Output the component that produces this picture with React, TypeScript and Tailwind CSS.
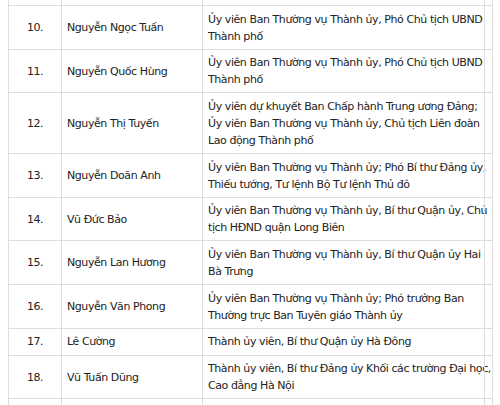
const rows: { n: string; name: string; lines: string[] }[] = [
  { n: '10.', name: 'Nguyễn Ngọc Tuấn', lines: ['Ủy viên Ban Thường vụ Thành ủy, Phó Chủ tịch UBND', 'Thành phố'] },
  { n: '11.', name: 'Nguyễn Quốc Hùng', lines: ['Ủy viên Ban Thường vụ Thành ủy, Phó Chủ tịch UBND', 'Thành phố'] },
  {
    n: '12.',
    name: 'Nguyễn Thị Tuyến',
    lines: ['Ủy viên dự khuyết Ban Chấp hành Trung ương Đảng;', 'Ủy viên Ban Thường vụ Thành ủy, Chủ tịch Liên đoàn', 'Lao động Thành phố'],
  },
  { n: '13.', name: 'Nguyễn Doãn Anh', lines: ['Ủy viên Ban Thường vụ Thành ủy; Phó Bí thư Đảng ủy,', 'Thiếu tướng, Tư lệnh Bộ Tư lệnh Thủ đô'] },
  { n: '14.', name: 'Vũ Đức Bảo', lines: ['Ủy viên Ban Thường vụ Thành ủy, Bí thư Quận ủy, Chủ', 'tịch HĐND quận Long Biên'] },
  { n: '15.', name: 'Nguyễn Lan Hương', lines: ['Ủy viên Ban Thường vụ Thành ủy, Bí thư Quận ủy Hai', 'Bà Trưng'] },
  { n: '16.', name: 'Nguyễn Văn Phong', lines: ['Ủy viên Ban Thường vụ Thành ủy; Phó trưởng Ban', 'Thường trực Ban Tuyên giáo Thành ủy'] },
  { n: '17.', name: 'Lê Cường', lines: ['Thành ủy viên, Bí thư Quận ủy Hà Đông'] },
  { n: '18.', name: 'Vũ Tuấn Dũng', lines: ['Thành ủy viên, Bí thư Đảng ủy Khối các trường Đại học,', 'Cao đẳng Hà Nội'] },
  { n: '', name: '', lines: [''] },
];

const grid = 'grid grid-cols-[53px_141px_282px_9px] w-[485px]';
const cell = 'border-l border-[#dedede]';

export default function App() {
  return (
    <div
      className="h-[405px] w-[500px] overflow-hidden bg-white pl-[8px] text-[11px] leading-[17px] tracking-[-0.42px] text-[#222]"
      style={{ fontFamily: '"DejaVu Sans", Verdana, sans-serif' }}
    >
      {/* cut-off row above */}
      <div className={`${grid} h-[5px]`}>
        <div className={cell} />
        <div className={cell} />
        <div className={cell} />
        <div className={`${cell} border-r`} />
      </div>
      {rows.map((r, i) => (
        <div key={i} className={`${grid} border-t border-[#dedede]`}>
          <div className={`${cell} flex items-center justify-center pt-[4.5px] pb-[4.2px]`}>{r.n}</div>
          <div className={`${cell} flex items-center whitespace-nowrap pl-[5px] pt-[4.5px] pb-[4.2px]`}>{r.name}</div>
          <div className={`${cell} whitespace-nowrap pl-[5px] pt-[4.5px] pb-[4.2px]`}>
            {r.lines.map((l, j) => (
              <div key={j}>{l || '\u00a0'}</div>
            ))}
          </div>
          <div className={`${cell} border-r`} />
        </div>
      ))}
    </div>
  );
}
